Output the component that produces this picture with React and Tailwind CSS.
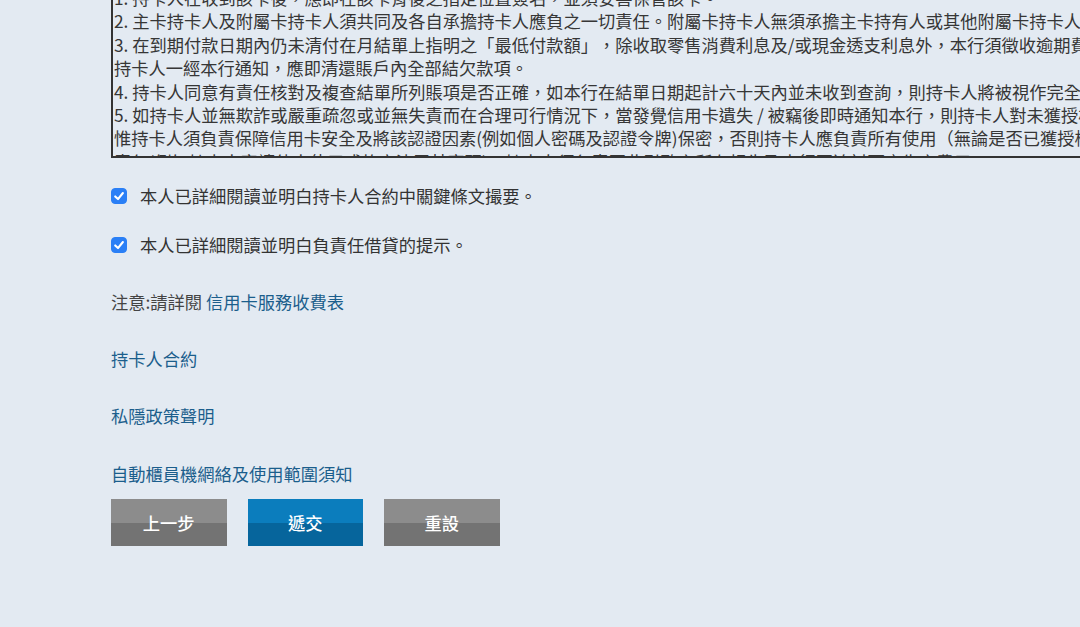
import { useState } from "react";

const termLines = [
  "1. 持卡人在收到該卡後，應即在該卡背後之指定位置簽名，並須妥善保管該卡。",
  "2. 主卡持卡人及附屬卡持卡人須共同及各自承擔持卡人應負之一切責任。附屬卡持卡人無須承擔主卡持有人或其他附屬卡持卡人之責任。",
  "3. 在到期付款日期內仍未清付在月結單上指明之「最低付款額」，除收取零售消費利息及/或現金透支利息外，本行須徵收逾期費用。",
  "持卡人一經本行通知，應即清還賬戶內全部結欠款項。",
  "4. 持卡人同意有責任核對及複查結單所列賬項是否正確，如本行在結單日期起計六十天內並未收到查詢，則持卡人將被視作完全接受結單內容。",
  "5. 如持卡人並無欺詐或嚴重疏忽或並無失責而在合理可行情況下，當發覺信用卡遺失 / 被竊後即時通知本行，則持卡人對未獲授權之交易無須負責。",
  "惟持卡人須負責保障信用卡安全及將該認證因素(例如個人密碼及認證令牌)保密，否則持卡人應負責所有使用（無論是否已獲授權）所引致之損失。",
  "責任(例如持卡人容讓他人使用或故意洩露其密碼)，持卡人須負責因此引致之所有損失及本行因追討而產生之費用。",
];

const links = ["持卡人合約", "私隱政策聲明", "自動櫃員機網絡及使用範圍須知"];

function Check({ checked, onChange, children }) {
  return (
    <label className="flex items-center gap-[13px] h-6 cursor-pointer">
      <span className="relative w-4 h-4 shrink-0">
        <input
          type="checkbox"
          checked={checked}
          onChange={onChange}
          className="appearance-none absolute inset-0 rounded-[4px] border border-[#8a9bb0] bg-white checked:border-[#2a7ff6] checked:bg-[#2a7ff6] cursor-pointer"
        />
        {checked && (
          <svg viewBox="0 0 16 16" className="absolute inset-0 w-4 h-4 pointer-events-none">
            <path d="M4.2 8.4 L7 11.1 L11.9 5" fill="none" stroke="white" strokeWidth="2.1" strokeLinecap="round" strokeLinejoin="round" />
          </svg>
        )}
      </span>
      <span className="text-[#333]">{children}</span>
    </label>
  );
}

function Button({ children, blue }) {
  return (
    <button
      className={`w-[115.5px] h-[47px] text-white text-[17.25px] font-medium ${
        blue
          ? "bg-[linear-gradient(#0b7dbd_50%,#06659c_50%)]"
          : "bg-[linear-gradient(#8c8c8c_50%,#737373_50%)]"
      }`}
    >
      {children}
    </button>
  );
}

export default function App() {
  const [agree1, setAgree1] = useState(true);
  const [agree2, setAgree2] = useState(true);

  return (
    <div
      className="w-full h-screen overflow-hidden bg-[#e3eaf2] pl-[111px] text-[17.25px] leading-6 [text-spacing-trim:space-all]"
      style={{ fontFamily: '"Noto Sans CJK TC", "Noto Sans", sans-serif' }}
    >
      {/* Terms box, scrolled part way */}
      <div className="w-[1500px] h-[160px] -mt-[2px] border-2 border-[#333] overflow-hidden">
        <div className="-mt-[14px] px-[1px] text-[#363636] leading-[23.4px]">
          {termLines.map((line, i) => (
            <div key={i} className="whitespace-nowrap">{line}</div>
          ))}
        </div>
      </div>

      <div className="flex flex-col items-start">
        <div className="mt-[26px]">
          <Check checked={agree1} onChange={() => setAgree1(!agree1)}>
            本人已詳細閱讀並明白持卡人合約中關鍵條文撮要。
          </Check>
        </div>
        <div className="mt-[25px]">
          <Check checked={agree2} onChange={() => setAgree2(!agree2)}>
            本人已詳細閱讀並明白負責任借貸的提示。
          </Check>
        </div>

        <p className="mt-[33px] text-[#444]">
          注意:請詳閱 <a href="#" className="text-[#1b5e8c]">信用卡服務收費表</a>
        </p>

        {links.map((l, i) => (
          <a
            key={l}
            href="#"
            className={`text-[#1b5e8c] ${i === 2 ? "mt-[34px]" : "mt-[33px]"}`}
          >
            {l}
          </a>
        ))}

        <div className="mt-[13px] flex gap-[21px]">
          <Button>上一步</Button>
          <Button blue>遞交</Button>
          <Button>重設</Button>
        </div>
      </div>
    </div>
  );
}
